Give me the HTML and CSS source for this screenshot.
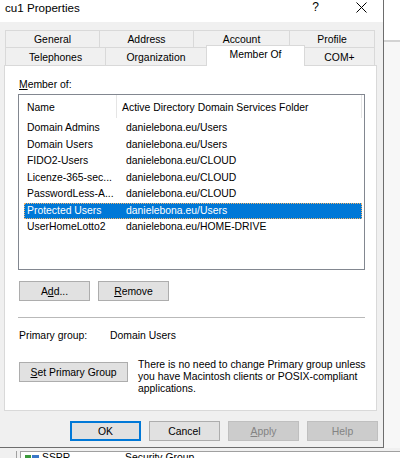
FILE: index.html
```html
<!DOCTYPE html>
<html lang="en">
<head>
  <meta charset="UTF-8">
  <title>cu1 Properties</title>
  <link rel="stylesheet" href="styles.css">
</head>
<body>

<div class="desk">
  <div class="dialog">

    <!-- TITLE BAR -->
    <div class="titlebar">
      <span class="title">cu1 Properties</span>
      <span class="q">?</span>
      <svg class="close" width="11" height="11" viewBox="0 0 11 11">
        <path d="M0.5 0.5L10.5 10.5M10.5 0.5L0.5 10.5" stroke="#000" stroke-width="1"/>
      </svg>
    </div>

    <div class="dlg-body">

      <!-- TABS -->
      <div class="tabrow row1">
        <div class="tab t-general">General</div>
        <div class="tab t-address">Address</div>
        <div class="tab t-account">Account</div>
        <div class="tab t-profile">Profile</div>
      </div>
      <div class="tabrow row2">
        <div class="tab t-phones">Telephones</div>
        <div class="tab t-org">Organization</div>
        <div class="tab t-member active">Member Of</div>
        <div class="tab t-com">COM+</div>
      </div>

      <!-- PANEL -->
      <div class="panel">
        <div class="label"><u>M</u>ember of:</div>

        <div class="list">
          <div class="list-head">
            <span class="col1">Name</span>
            <span class="col2">Active Directory Domain Services Folder</span>
          </div>
          <div class="rows">
            <div class="row"><span>Domain Admins</span><span>danielebona.eu/Users</span></div>
            <div class="row"><span>Domain Users</span><span>danielebona.eu/Users</span></div>
            <div class="row"><span>FIDO2-Users</span><span>danielebona.eu/CLOUD</span></div>
            <div class="row"><span>Licenze-365-sec...</span><span>danielebona.eu/CLOUD</span></div>
            <div class="row"><span>PasswordLess-A...</span><span>danielebona.eu/CLOUD</span></div>
            <div class="row selected"><span>Protected Users</span><span>danielebona.eu/Users</span></div>
            <div class="row"><span>UserHomeLotto2</span><span>danielebona.eu/HOME-DRIVE</span></div>
          </div>
        </div>

        <div class="list-buttons">
          <button class="btn">A<u>d</u>d...</button>
          <button class="btn"><u>R</u>emove</button>
        </div>

        <div class="sep"></div>

        <div class="primary">
          <span class="primary-label">Primary group:</span>
          <span>Domain Users</span>
        </div>

        <div class="set-primary">
          <button class="btn btn-wide"><u>S</u>et Primary Group</button>
          <p>There is no need to change Primary group unless you have Macintosh clients or POSIX-compliant applications.</p>
        </div>
      </div>

      <!-- FOOTER -->
      <div class="footer">
        <button class="btn btn-default">OK</button>
        <button class="btn">Cancel</button>
        <button class="btn disabled"><u>A</u>pply</button>
        <button class="btn disabled">Help</button>
      </div>

    </div>
  </div>

  <!-- window behind, right side -->
  <div class="behind-right"></div>

  <!-- window behind, bottom -->
  <div class="behind-bottom">
    <div class="bb-gutter"></div>
    <div class="bb-item">
      <svg width="15" height="10" viewBox="0 0 15 10">
        <rect x="0" y="3" width="6" height="7" fill="#3c9a3c"/>
        <rect x="7" y="3" width="7" height="7" fill="#3a78c8"/>
      </svg>
      <span class="bb-name">SSPR</span>
      <span class="bb-type">Security Group...</span>
    </div>
  </div>
</div>

</body>
</html>
```

FILE: styles.css
```css
body {
  margin: 0;
  font-family: "Liberation Sans", Arial, sans-serif;
  font-size: 10.4px;
  color: #000;
  background-color: #fff;
  overflow: hidden;
}

button {
  font-family: inherit;
  font-size: inherit;
}

.desk {
  display: grid;
  grid-template-columns: 384px 16px;
  grid-template-rows: 448px 10px;
  width: 400px;
  height: 458px;
  overflow: hidden;
}

/* DIALOG */
.dialog {
  background-color: #f0f0f0;
  border-right: 1px solid #6d6d6d;
  border-bottom: 1px solid #6d6d6d;
  display: flex;
  flex-direction: column;
}

.titlebar {
  flex: none;
  height: 22px;
  background-color: #fff;
  display: flex;
  align-items: flex-start;
  padding-left: 5px;
  line-height: 15px;
}

.title {
  font-size: 11.6px;
  flex: 1;
}

.q {
  font-size: 12px;
  margin-right: 37px;
}

.close {
  margin-top: 2px;
  margin-right: 16px;
}

.dlg-body {
  padding: 8px 6px 0 4px;
}

/* TABS */
.tabrow {
  display: flex;
  margin-left: 1px;
}

.row1 {
  height: 17px;
}

.row2 {
  height: 18px;
  align-items: flex-start;
}

.tab {
  box-sizing: border-box;
  height: 100%;
  border: 1px solid #d9d9d9;
  border-bottom: none;
  margin-left: -1px;
  text-align: center;
  background-color: #f0f0f0;
}

.tab:first-child {
  margin-left: 0;
}

.row1 .tab {
  line-height: 18px;
}

.row2 .tab {
  line-height: 19px;
}

.t-general { width: 95px; }
.t-address { width: 95px; }
.t-account { width: 97px; }
.t-profile { width: 86px; }
.t-phones { width: 101px; }
.t-org { width: 102px; }
.t-member { width: 99px; }
.t-com { width: 71px; }

.tab.active {
  position: relative;
  z-index: 1;
  height: 21px;
  margin-top: -2px;
  background-color: #fff;
  line-height: 17px;
}

/* PANEL */
.panel {
  box-sizing: border-box;
  background-color: #fff;
  border: 1px solid #d9d9d9;
  height: 346px;
  padding: 13px 11px 0 13px;
}

.label {
  line-height: 12px;
  margin-left: 1px;
}

.list {
  margin-top: 3px;
  height: 174px;
  border: 1px solid #828790;
}

.list-head {
  display: flex;
  height: 23px;
  line-height: 25px;
}

.list-head span {
  box-sizing: border-box;
  border-right: 1px solid #e5e5e5;
}

.list-head .col1 {
  width: 98px;
  padding-left: 8px;
}

.list-head .col2 {
  width: 245px;
  padding-left: 5px;
}

.rows {
  padding: 2px 2px 0 5px;
}

.row {
  display: grid;
  grid-template-columns: 99px 1fr;
  height: 16.5px;
  line-height: 16.5px;
  padding-left: 3px;
}

.row.selected {
  background-color: #0078d7;
  color: #fff;
  outline: 1px dotted #f2b36b;
  outline-offset: -1px;
}

/* BUTTONS */
.btn {
  box-sizing: border-box;
  width: 71px;
  height: 20px;
  padding: 0;
  background-color: #e1e1e1;
  border: 1px solid #adadad;
  color: #000;
}

.btn-wide {
  width: 109px;
}

.btn-default {
  border-color: #0078d7;
  box-shadow: inset 0 0 0 1px #0078d7;
}

.btn.disabled {
  background-color: #cccccc;
  border-color: #bfbfbf;
  color: #838383;
}

.list-buttons {
  display: flex;
  gap: 8px;
  margin-top: 11px;
  margin-left: 1px;
}

.sep {
  margin-top: 16px;
  border-top: 1px solid #b9b9b9;
}

.primary {
  margin-top: 12px;
  margin-left: 1px;
  line-height: 12px;
  display: flex;
}

.primary-label {
  width: 91px;
}

.set-primary {
  display: flex;
  align-items: flex-start;
  margin-top: 17px;
  margin-left: 1px;
}

.set-primary .btn {
  margin-top: 3px;
  flex: none;
}

.set-primary p {
  flex: none;
  margin: 0 0 0 10px;
  line-height: 12px;
  width: 236px;
}

/* FOOTER */
.footer {
  display: flex;
  justify-content: flex-end;
  gap: 8px;
  margin-top: 10px;
  margin-right: -1px;
}

/* WINDOWS BEHIND */
.behind-right {
  background-image: linear-gradient(#fff 40px, #d3d3d3 40px, #d3d3d3 42px, #f7f7f7 42px);
}

.behind-bottom {
  grid-column: 1 / 3;
  display: flex;
  background-color: #f0f0f0;
  border-top: 3px solid #f0f0f0;
}

.bb-gutter {
  width: 16px;
  border-right: 1px solid #a0a0a0;
}

.bb-item {
  flex: 1;
  margin-left: 3px;
  border-left: 1px solid #a0a0a0;
  border-top: 1px solid #a0a0a0;
  background-color: #fff;
  display: flex;
  align-items: flex-start;
  padding-left: 4px;
  line-height: 12px;
}

.bb-name {
  margin-left: 2px;
  width: 83px;
}
```
